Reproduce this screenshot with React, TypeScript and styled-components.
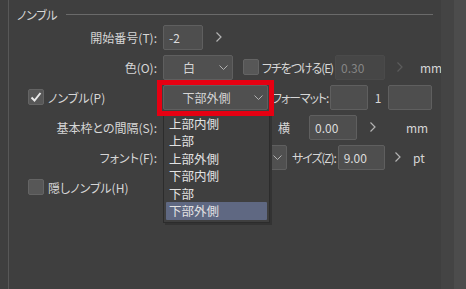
import React from 'react';
import styled, { createGlobalStyle } from 'styled-components';

const GlobalStyle = createGlobalStyle`
  html, body, #root {
    height: 100%;
  }
  body {
    margin: 0;
    background: #3f3f3f;
    font-family: "Noto Sans CJK JP", "Liberation Sans", sans-serif;
    font-size: 12px;
    font-feature-settings: "palt";
    color: #d6d6d6;
    overflow: hidden;
  }
`;

const Window = styled.div`
  display: flex;
  height: 100%;
`;

const Main = styled.div`
  width: 441px;
  padding-left: 8px;
  box-sizing: border-box;
  display: flex;
`;

const ScrollTrack = styled.div<{ $shade: string }>`
  width: ${p => (p.$shade === 'light' ? 12 : 13)}px;
  background: ${p => (p.$shade === 'light' ? '#4c4c4c' : '#444444')};
`;

const Section = styled.section`
  flex: 1;
  border-left: 1px solid #585858;
  display: flex;
  flex-direction: column;
`;

const Header = styled.div`
  display: flex;
  align-items: center;
  height: 16px;
  margin-top: 6px;
  padding: 0 9px 0 8px;
  gap: 9px;
  white-space: nowrap;
  letter-spacing: -0.3px;
`;

const HeaderLine = styled.div`
  flex: 1;
  height: 1px;
  background: #6a6a6a;
`;

const Row = styled.div<{ $indent?: boolean }>`
  display: flex;
  align-items: center;
  height: 30px;
  padding-left: ${p => (p.$indent ? 19 : 0)}px;
`;

const Label = styled.div`
  width: 148px;
  margin-right: 6px;
  flex-shrink: 0;
  text-align: right;
  white-space: nowrap;
`;

/* a label + input pair whose outer edges are fixed; the input takes what the text leaves */
const Field = styled.div<{ $w: number; $ml?: number }>`
  display: flex;
  align-items: center;
  width: ${p => p.$w}px;
  margin-left: ${p => p.$ml ?? 0}px;
  flex-shrink: 0;
  gap: 2px;
`;

const Text = styled.span<{ $w?: number; $ml?: number; $center?: boolean; $tight?: boolean }>`
  display: inline-block;
  flex-shrink: 0;
  white-space: nowrap;
  width: ${p => (p.$w ? `${p.$w}px` : 'auto')};
  margin-left: ${p => p.$ml ?? 0}px;
  text-align: ${p => (p.$center ? 'center' : 'left')};
  letter-spacing: ${p => (p.$tight ? -1.1 : 0)}px;
`;

const Input = styled.div<{ $w?: number; $ml?: number; $disabled?: boolean }>`
  height: 25px;
  width: ${p => (p.$w ? `${p.$w}px` : 'auto')};
  flex: ${p => (p.$w ? '0 0 auto' : '1 1 0')};
  margin-left: ${p => p.$ml ?? 0}px;
  box-sizing: border-box;
  border: 1px solid ${p => (p.$disabled ? '#4a4a4a' : '#5f5f5f')};
  background: ${p => (p.$disabled ? '#464646' : '#4e4e4e')};
  color: ${p => (p.$disabled ? '#858585' : '#dcdcdc')};
  border-radius: 2px;
  padding-left: 5px;
  display: flex;
  align-items: center;
`;

const SelectWrap = styled.div`
  position: relative;
  flex-shrink: 0;
`;

const SelectBox = styled.div<{ $w: number }>`
  height: 25px;
  width: ${p => p.$w}px;
  flex-shrink: 0;
  box-sizing: border-box;
  border: 1px solid #5f5f5f;
  background: #505050;
  border-radius: 2px;
  display: flex;
  align-items: center;
`;

const SelectValue = styled.span`
  flex: 1;
  text-align: center;
`;

const Caret = styled.span`
  width: 18px;
  display: flex;
  justify-content: center;
`;

const RedFrame = styled.div`
  position: absolute;
  left: -6px;
  top: -5px;
  right: -6px;
  bottom: -6px;
  border: 5px solid #e60012;
  pointer-events: none;
  z-index: 3;
`;

const List = styled.ul`
  position: absolute;
  top: 26px;
  left: 0;
  width: 107px;
  margin: 0;
  padding: 3px 2px 2px;
  box-sizing: border-box;
  list-style: none;
  background: #3f3f3f;
  border: 1px solid #2c2c2c;
  box-shadow: 2px 2px 0 #333333;
  z-index: 2;
`;

const Item = styled.li<{ $active?: boolean }>`
  height: 17.5px;
  line-height: 17.5px;
  padding-left: 3px;
  font-size: 12.5px;
  color: #e2e2e2;
  background: ${p => (p.$active ? '#5f6882' : 'transparent')};
  border-radius: 1px;
`;

const Arrow = styled.span<{ $ml?: number; $dim?: boolean }>`
  width: 16px;
  margin-left: ${p => p.$ml ?? 0}px;
  flex-shrink: 0;
  display: flex;
  justify-content: center;
  color: ${p => (p.$dim ? '#5c5c5c' : '#b4b4b4')};
`;

const Check = styled.span<{ $ml?: number }>`
  width: 16px;
  height: 16px;
  margin-left: ${p => p.$ml ?? 0}px;
  flex-shrink: 0;
  box-sizing: border-box;
  border: 1px solid #646464;
  background: #575757;
  border-radius: 2px;
  display: flex;
  align-items: center;
  justify-content: center;
`;

const ChevronDown = () => (
  <svg width="9" height="5" viewBox="0 0 9 5">
    <polyline points="0.5,0.5 4.5,4.5 8.5,0.5" fill="none" stroke="#b0b0b0" strokeWidth="1" />
  </svg>
);

const ChevronRight = () => (
  <svg width="6" height="10" viewBox="0 0 6 10">
    <polyline points="0.5,0.5 5,5 0.5,9.5" fill="none" stroke="currentColor" strokeWidth="1.2" />
  </svg>
);

const CheckMark = () => (
  <svg width="14" height="14" viewBox="0 0 14 14">
    <polyline points="2.5,7.5 5.5,10.5 11.5,3" fill="none" stroke="#e8e8e8" strokeWidth="2" />
  </svg>
);

const positions = ['上部内側', '上部', '上部外側', '下部内側', '下部', '下部外側'];

export default function App() {
  return (
    <>
      <GlobalStyle />
      <Window>
        <Main>
          <Section>
            <Header>
              <span>ノンブル</span>
              <HeaderLine />
            </Header>

            <Row>
              <Label>開始番号(T):</Label>
              <Input $w={40}>-2</Input>
              <Arrow $ml={8}>
                <ChevronRight />
              </Arrow>
            </Row>

            <Row>
              <Label>色(O):</Label>
              <SelectBox $w={70}>
                <SelectValue>白</SelectValue>
                <Caret>
                  <ChevronDown />
                </Caret>
              </SelectBox>
              <Field $w={142} $ml={10}>
                <Check />
                <Text $tight $ml={1}>フチをつける(E)</Text>
                <Input $disabled>0.30</Input>
              </Field>
              <Arrow $ml={7} $dim>
                <ChevronRight />
              </Arrow>
              <Text $ml={12}>mm</Text>
            </Row>

            <Row $indent>
              <Check>
                <CheckMark />
              </Check>
              <Text $w={115} $ml={4}>ノンブル(P)</Text>
              <SelectWrap>
                <SelectBox $w={105}>
                  <SelectValue>下部外側</SelectValue>
                  <Caret>
                    <ChevronDown />
                  </Caret>
                </SelectBox>
                <RedFrame />
                <List>
                  {positions.map((p, i) => (
                    <Item key={p} $active={i === positions.length - 1}>
                      {p}
                    </Item>
                  ))}
                </List>
              </SelectWrap>
              <Field $w={96} $ml={4}>
                <Text $tight>フォーマット:</Text>
                <Input />
              </Field>
              <Text $w={20} $center>1</Text>
              <Input $w={44} />
            </Row>

            <Row>
              <Label>基本枠との間隔(S):</Label>
              <SelectBox $w={105} />
              <Text $w={31} $ml={10}>横</Text>
              <Input $w={48}>0.00</Input>
              <Arrow $ml={8}>
                <ChevronRight />
              </Arrow>
              <Text $ml={25}>mm</Text>
            </Row>

            <Row>
              <Label>フォント(F):</Label>
              <SelectBox $w={124}>
                <SelectValue />
                <Caret>
                  <ChevronDown />
                </Caret>
              </SelectBox>
              <Field $w={93} $ml={5}>
                <Text $tight>サイズ(Z):</Text>
                <Input>9.00</Input>
              </Field>
              <Arrow $ml={5}>
                <ChevronRight />
              </Arrow>
              <Text $ml={7}>pt</Text>
            </Row>

            <Row $indent>
              <Check />
              <Text $ml={4}>隠しノンブル(H)</Text>
            </Row>
          </Section>
        </Main>
        <ScrollTrack $shade="dark" />
        <ScrollTrack $shade="light" />
      </Window>
    </>
  );
}
